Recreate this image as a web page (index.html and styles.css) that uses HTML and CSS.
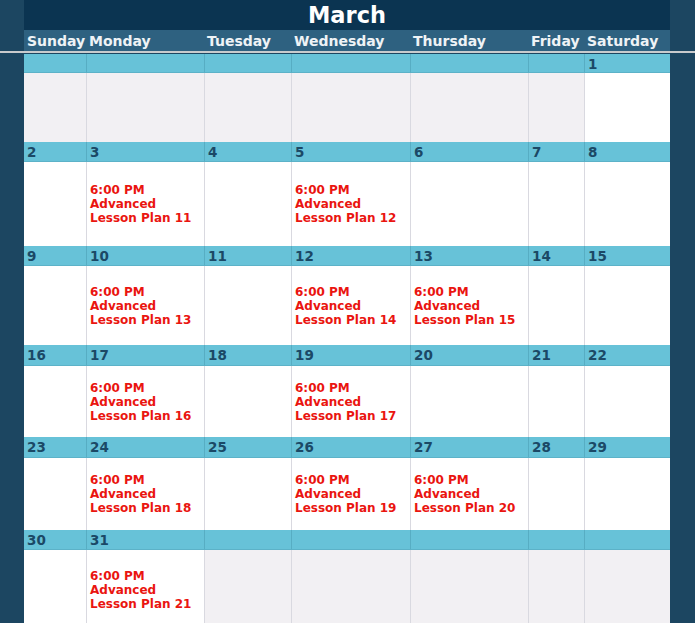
FILE: index.html
```html
<!DOCTYPE html>
<html>
<head>
<meta charset="utf-8">
<link rel="stylesheet" href="styles.css">
</head>
<body>
<div class="page">
  <div class="inner">
    <div class="title">March</div>
    <div class="days">
      <div>Sunday</div><div>Monday</div><div>Tuesday</div><div>Wednesday</div><div>Thursday</div><div>Friday</div><div>Saturday</div>
    </div>
  </div>
  <div class="rule"></div>
  <div class="inner cal">
    <div class="week w1">
      <div class="num"></div><div class="num"></div><div class="num"></div><div class="num"></div><div class="num"></div><div class="num"></div><div class="num">1</div>
      <div class="body off"></div><div class="body off"></div><div class="body off"></div><div class="body off"></div><div class="body off"></div><div class="body off"></div><div class="body"></div>
    </div>
    <div class="week w2">
      <div class="num">2</div><div class="num">3</div><div class="num">4</div><div class="num">5</div><div class="num">6</div><div class="num">7</div><div class="num">8</div>
      <div class="body"></div>
      <div class="body"><div class="ev">6:00 PM<br>Advanced<br>Lesson Plan 11</div></div>
      <div class="body"></div>
      <div class="body"><div class="ev">6:00 PM<br>Advanced<br>Lesson Plan 12</div></div>
      <div class="body"></div><div class="body"></div><div class="body"></div>
    </div>
    <div class="week w3">
      <div class="num">9</div><div class="num">10</div><div class="num">11</div><div class="num">12</div><div class="num">13</div><div class="num">14</div><div class="num">15</div>
      <div class="body"></div>
      <div class="body"><div class="ev">6:00 PM<br>Advanced<br>Lesson Plan 13</div></div>
      <div class="body"></div>
      <div class="body"><div class="ev">6:00 PM<br>Advanced<br>Lesson Plan 14</div></div>
      <div class="body"><div class="ev">6:00 PM<br>Advanced<br>Lesson Plan 15</div></div>
      <div class="body"></div><div class="body"></div>
    </div>
    <div class="week w4">
      <div class="num">16</div><div class="num">17</div><div class="num">18</div><div class="num">19</div><div class="num">20</div><div class="num">21</div><div class="num">22</div>
      <div class="body"></div>
      <div class="body"><div class="ev">6:00 PM<br>Advanced<br>Lesson Plan 16</div></div>
      <div class="body"></div>
      <div class="body"><div class="ev">6:00 PM<br>Advanced<br>Lesson Plan 17</div></div>
      <div class="body"></div><div class="body"></div><div class="body"></div>
    </div>
    <div class="week w5">
      <div class="num">23</div><div class="num">24</div><div class="num">25</div><div class="num">26</div><div class="num">27</div><div class="num">28</div><div class="num">29</div>
      <div class="body"></div>
      <div class="body"><div class="ev">6:00 PM<br>Advanced<br>Lesson Plan 18</div></div>
      <div class="body"></div>
      <div class="body"><div class="ev">6:00 PM<br>Advanced<br>Lesson Plan 19</div></div>
      <div class="body"><div class="ev">6:00 PM<br>Advanced<br>Lesson Plan 20</div></div>
      <div class="body"></div><div class="body"></div>
    </div>
    <div class="week w6">
      <div class="num">30</div><div class="num">31</div><div class="num"></div><div class="num"></div><div class="num"></div><div class="num"></div><div class="num"></div>
      <div class="body"></div>
      <div class="body"><div class="ev">6:00 PM<br>Advanced<br>Lesson Plan 21</div></div>
      <div class="body off"></div><div class="body off"></div><div class="body off"></div><div class="body off"></div><div class="body off"></div>
    </div>
  </div>
</div>
</body>
</html>
```

FILE: styles.css
```css
html, body {
  margin: 0;
  padding: 0;
  background: #1c4661;
  overflow: hidden;
}
.page {
  width: 695px;
  height: 623px;
  overflow: hidden;
  font-family: "DejaVu Sans", Verdana, sans-serif;
  font-weight: bold;
}
.inner {
  margin-left: 24px;
  width: 646px;
}
.title {
  height: 30px;
  background: #0b3451;
  color: #ffffff;
  font-size: 22.5px;
  line-height: 31px;
  text-align: center;
}
.days {
  display: grid;
  grid-template-columns: 62px 118px 87px 119px 118px 56px 86px;
  height: 21px;
  background: #2e6180;
  color: #eef3f6;
  font-size: 14px;
  line-height: 22px;
}
.days div {
  padding-left: 3px;
  white-space: nowrap;
}
.rule {
  height: 2px;
  background: #c9cbcd;
  margin-bottom: 1px;
}
.week {
  display: grid;
  grid-template-columns: 62px 118px 87px 119px 118px 56px 86px;
}
.w1 { grid-template-rows: 19px 69px; }
.w2 { grid-template-rows: 20px 84px; }
.w3 { grid-template-rows: 20px 79px; }
.w4 { grid-template-rows: 21px 71px; }
.w5 { grid-template-rows: 21px 72px; }
.w6 { grid-template-rows: 20px 80px; }
.num {
  background: #67c2d8;
  color: #1b4966;
  font-size: 13.5px;
  line-height: 21px;
  padding-left: 3px;
  border-left: 1px solid #57adc3;
  border-bottom: 1px solid #5cb2c8;
  box-sizing: border-box;
}
.num:first-child {
  border-left: none;
}
.body {
  background: #ffffff;
  border-left: 1px solid #d9d9e0;
  display: flex;
  align-items: center;
  padding-left: 3px;
}
.week > .body:nth-child(8) {
  border-left: none;
}
.body.off {
  background: #f2f0f3;
}
.ev {
  color: #ea1510;
  font-size: 12px;
  line-height: 14px;
  white-space: nowrap;
}
```
